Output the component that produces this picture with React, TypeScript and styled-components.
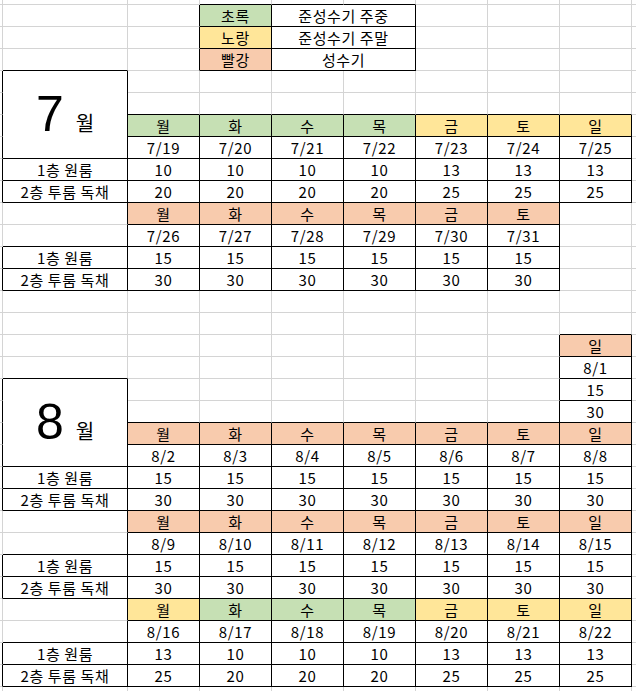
import React from "react";
import styled, { createGlobalStyle } from "styled-components";

const GRID = "#d4d4d4";
const LINE = "#000000";
const GREEN = "#c6e0b4";
const YELLOW = "#ffe699";
const SALMON = "#f8cbad";

interface CellDef {
  row: number;
  col: number;
  rowSpan?: number;
  colSpan?: number;
  text?: string;
  fill?: string;
  month?: string;
  boxed: boolean;
}

const GlobalStyle = createGlobalStyle`
  html, body {
    margin: 0;
    padding: 0;
    background: #ffffff;
    overflow: hidden;
  }
  body {
    font-family: "Noto Sans CJK KR", "Noto Sans", sans-serif;
    color: #000000;
  }
`;

const Sheet = styled.div`
  display: grid;
  grid-template-columns: 3px 125px repeat(7, 72px) 1fr;
  grid-template-rows: 5px repeat(31, 22px) 1fr;
  width: 100vw;
  height: 100vh;
`;

interface CellProps {
  $row: number;
  $col: number;
  $rs: number;
  $cs: number;
  $bg?: string;
  $right?: string;
  $bottom?: string;
}

const Cell = styled.div<CellProps>`
  grid-row: ${(p) => p.$row + 2} / span ${(p) => p.$rs};
  grid-column: ${(p) => p.$col + 2} / span ${(p) => p.$cs};
  box-sizing: border-box;
  display: flex;
  align-items: center;
  justify-content: center;
  background: ${(p) => p.$bg || "transparent"};
  border-right: ${(p) => (p.$right ? `1px solid ${p.$right}` : "none")};
  border-bottom: ${(p) => (p.$bottom ? `1px solid ${p.$bottom}` : "none")};
  font-size: 15px;
  line-height: 21px;
  letter-spacing: 0.6px;
  white-space: nowrap;
  overflow: hidden;
  padding-bottom: 1px;
`;

const MonthNum = styled.span`
  font-family: "Liberation Sans", Arial, sans-serif;
  font-size: 50px;
  line-height: 50px;
  letter-spacing: 0;
`;

const MonthUnit = styled.span`
  font-family: "Noto Sans CJK KR", sans-serif;
  font-size: 20px;
  line-height: 20px;
  margin-left: 12px;
  letter-spacing: 0;
`;

const MonthInner = styled.div`
  display: flex;
  align-items: baseline;
`;

const DAYS = ["월", "화", "수", "목", "금", "토", "일"];
const G = GREEN;
const Y = YELLOW;
const S = SALMON;

const defs: CellDef[] = [];

// legend
[
  ["초록", GREEN, "준성수기 주중"],
  ["노랑", YELLOW, "준성수기 주말"],
  ["빨강", SALMON, "성수기"],
].forEach(([name, fill, desc], i) => {
  defs.push({ row: i, col: 2, text: name, fill, boxed: true });
  defs.push({ row: i, col: 3, colSpan: 2, text: desc, boxed: true });
});

// month title boxes
defs.push({ row: 3, col: 0, rowSpan: 4, month: "7", boxed: true });
defs.push({ row: 17, col: 0, rowSpan: 4, month: "8", boxed: true });

function week(
  row: number,
  startCol: number,
  fills: string[],
  dates: string[],
  first: number[],
  second: number[],
  labels = true
) {
  fills.forEach((fill, i) => {
    const col = startCol + i;
    defs.push({ row, col, text: DAYS[col - 1], fill, boxed: true });
    defs.push({ row: row + 1, col, text: dates[i], boxed: true });
    defs.push({ row: row + 2, col, text: String(first[i]), boxed: true });
    defs.push({ row: row + 3, col, text: String(second[i]), boxed: true });
  });
  if (labels) {
    defs.push({ row: row + 2, col: 0, text: "1층 원룸", boxed: true });
    defs.push({ row: row + 3, col: 0, text: "2층 투룸 독채", boxed: true });
  }
}

const dates = (m: number, from: number, n: number) =>
  Array.from({ length: n }, (_, i) => `${m}/${from + i}`);
const rep = (v: number, n: number) => Array(n).fill(v);

week(5, 1, [G, G, G, G, Y, Y, Y], dates(7, 19, 7), [10, 10, 10, 10, 13, 13, 13], [20, 20, 20, 20, 25, 25, 25]);
week(9, 1, rep(S, 6), dates(7, 26, 6), rep(15, 6), rep(30, 6));
week(15, 7, [S], ["8/1"], [15], [30], false);
week(19, 1, rep(S, 7), dates(8, 2, 7), rep(15, 7), rep(30, 7));
week(23, 1, rep(S, 7), dates(8, 9, 7), rep(15, 7), rep(30, 7));
week(27, 1, [Y, G, G, G, Y, Y, Y], dates(8, 16, 7), [13, 10, 10, 10, 13, 13, 13], [25, 20, 20, 20, 25, 25, 25]);

// fill the rest of the sheet with empty cells
const owner = new Map<string, CellDef>();
defs.forEach((d) => {
  for (let r = d.row; r < d.row + (d.rowSpan || 1); r++)
    for (let c = d.col; c < d.col + (d.colSpan || 1); c++) owner.set(`${r},${c}`, d);
});
for (let r = -1; r <= 31; r++) {
  for (let c = -1; c <= 8; c++) {
    if (!owner.has(`${r},${c}`)) {
      const d: CellDef = { row: r, col: c, boxed: false };
      defs.push(d);
      owner.set(`${r},${c}`, d);
    }
  }
}

const isBoxed = (r: number, c: number) => !!owner.get(`${r},${c}`)?.boxed;

function edges(d: CellDef) {
  const rs = d.rowSpan || 1;
  const cs = d.colSpan || 1;
  let right: string | undefined;
  let bottom: string | undefined;
  if (d.col + cs - 1 < 8) {
    let black = d.boxed;
    for (let r = d.row; r < d.row + rs; r++) if (isBoxed(r, d.col + cs)) black = true;
    right = black ? LINE : GRID;
  }
  if (d.row + rs - 1 < 31) {
    let black = d.boxed;
    for (let c = d.col; c < d.col + cs; c++) if (isBoxed(d.row + rs, c)) black = true;
    bottom = black ? LINE : GRID;
  }
  return { right, bottom };
}

export default function App() {
  return (
    <>
      <GlobalStyle />
      <Sheet>
        {defs.map((d) => {
          const { right, bottom } = edges(d);
          return (
            <Cell
              key={`${d.row}-${d.col}`}
              $row={d.row}
              $col={d.col}
              $rs={d.rowSpan || 1}
              $cs={d.colSpan || 1}
              $bg={d.fill}
              $right={right}
              $bottom={bottom}
            >
              {d.month ? (
                <MonthInner>
                  <MonthNum>{d.month}</MonthNum>
                  <MonthUnit>월</MonthUnit>
                </MonthInner>
              ) : (
                d.text
              )}
            </Cell>
          );
        })}
      </Sheet>
    </>
  );
}
